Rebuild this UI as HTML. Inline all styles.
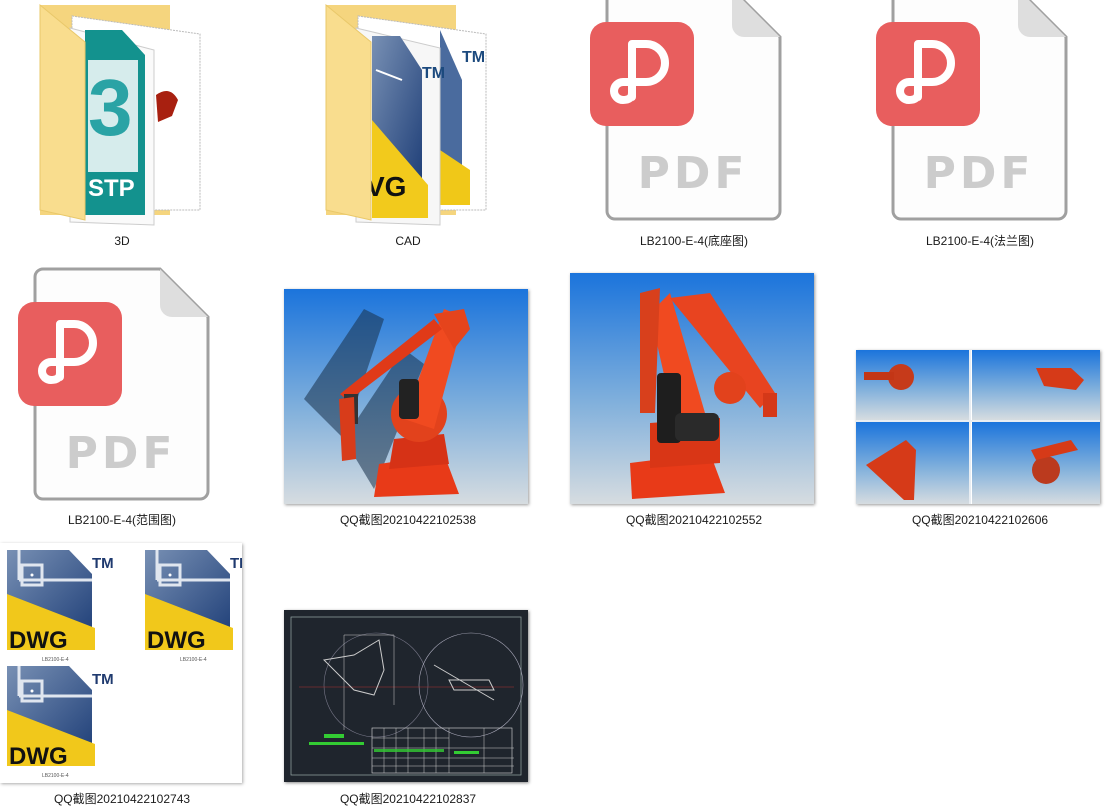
<!DOCTYPE html>
<html><head><meta charset="utf-8"><style>
html,body{margin:0;padding:0;background:#fff;width:1106px;height:812px;overflow:hidden;position:relative}
.a{position:absolute}
.l{position:absolute;width:240px;text-align:center;font:12px "Liberation Sans","Noto Sans CJK SC",sans-serif;color:#1a1a1a;line-height:14px}
svg{position:absolute;overflow:visible}
</style></head><body>

<svg width="0" height="0" style="position:absolute">
<defs>
<linearGradient id="sky" x1="0" y1="0" x2="0" y2="1"><stop offset="0" stop-color="#1b74dc"/><stop offset="0.55" stop-color="#7fafdc"/><stop offset="1" stop-color="#d6dce0"/></linearGradient>
<linearGradient id="dwgb" x1="0" y1="0" x2="1" y2="1"><stop offset="0" stop-color="#7890b4"/><stop offset="1" stop-color="#1f3f78"/></linearGradient>
<g id="pdf">
<path d="M8 0 H125 L173 48 V222 a8 8 0 0 1 -8 8 H8 a8 8 0 0 1 -8 -8 V8 a8 8 0 0 1 8 -8Z" fill="#fdfdfd" stroke="#a0a0a0" stroke-width="3"/>
<path d="M125 0 V36 a12 12 0 0 0 12 12 H173Z" fill="#dedede"/>
<rect x="-17" y="33" width="104" height="104" rx="16" fill="#e85e5e"/>
<g transform="translate(-17,33)">
<path d="M42 75 V22 H56 a19 19 0 0 1 0 38 H33 a9 9 0 0 0 0 18 q9 0 9 -7" fill="none" stroke="#fff" stroke-width="8" stroke-linecap="round" stroke-linejoin="round"/>
</g>
<text x="86" y="199" text-anchor="middle" font-family="DejaVu Sans,Liberation Sans,sans-serif" font-size="44" font-weight="bold" fill="#cccccc" letter-spacing="4">PDF</text>
</g>
<g id="dwg">
<path d="M0 0 H62 L85 24 V88 H0Z" fill="url(#dwgb)"/>
<path d="M12 0 V30 M12 30 H85" stroke="#e0e6ef" stroke-width="3"/>
<rect x="15" y="15" width="20" height="20" fill="none" stroke="#e0e6ef" stroke-width="3"/>
<circle cx="25" cy="25" r="1.5" fill="#fff"/>
<path d="M0 44 L88 78 V100 H0Z" fill="#f1c81b"/>
<text x="2" y="98" font-family="Liberation Sans,sans-serif" font-size="24" font-weight="bold" fill="#111">DWG</text>
<text x="85" y="18" font-family="Liberation Sans,sans-serif" font-size="15" font-weight="bold" fill="#1f3a6f">TM</text>
<text x="35" y="111" font-family="Liberation Sans,sans-serif" font-size="5" fill="#555">LB2100-E-4</text>
</g>
</defs>
</svg>

<!-- 3D folder -->
<svg class="a" style="left:0;top:0" width="260" height="230">
<path d="M40 5 H170 V215 H40Z" fill="#f5d57e"/>
<path d="M72 16 L200 34 V210 L72 210Z" fill="#fff" stroke="#bbb" stroke-dasharray="2 1"/>
<path d="M70 28 L154 50 V225 L70 222Z" fill="#fafafa" stroke="#ccc"/>
<path d="M85 30 H122 L145 55 V215 H85Z" fill="#13928e"/>
<path d="M88 60 H138 V172 H88Z" fill="#d6ecec"/>
<text x="88" y="135" font-family="Liberation Sans,sans-serif" font-size="80" font-weight="bold" fill="#2aa3a5">3</text>
<text x="88" y="196" font-family="Liberation Sans,sans-serif" font-size="24" font-weight="bold" fill="#fff">STP</text>
<path d="M156 95 Q170 85 178 100 L172 116 L158 122Z" fill="#a82010"/>
<path d="M40 5 L85 42 V220 L40 210Z" fill="#f9dd8e" stroke="#e9c86a"/>
</svg>
<div class="l" style="left:2px;top:234px">3D</div>

<!-- CAD folder -->
<svg class="a" style="left:0;top:0" width="520" height="230">
<path d="M326 5 H456 V215 H326Z" fill="#f5d57e"/>
<path d="M358 16 L486 34 V210 L358 210Z" fill="#fff" stroke="#bbb" stroke-dasharray="2 1"/>
<path d="M440 30 L462 80 V200 L440 205Z" fill="#4a6b9e"/>
<path d="M440 150 L470 170 V205 L440 205Z" fill="#f0c818"/>
<text x="462" y="62" font-family="Liberation Sans,sans-serif" font-size="16" font-weight="bold" fill="#1c4a7e">TM</text>
<path d="M356 28 L440 48 V225 L356 222Z" fill="#f7f7f7" stroke="#ccc"/>
<path d="M372 36 H400 L422 70 V185 H372Z" fill="url(#dwgb)"/>
<path d="M376 70 L402 80" stroke="#fff" stroke-width="2"/>
<path d="M372 120 L428 185 V218 H372Z" fill="#f2ca1c"/>
<text x="366" y="196" font-family="Liberation Sans,sans-serif" font-size="28" font-weight="bold" fill="#111">VG</text>
<text x="422" y="78" font-family="Liberation Sans,sans-serif" font-size="16" font-weight="bold" fill="#1c4a7e">TM</text>
<path d="M326 5 L371 42 V220 L326 210Z" fill="#f9dd8e" stroke="#e9c86a"/>
</svg>
<div class="l" style="left:288px;top:234px">CAD</div>

<!-- PDFs -->
<svg class="a" style="left:607px;top:-11px" width="175" height="232"><use href="#pdf"/></svg>
<div class="l" style="left:574px;top:234px">LB2100-E-4(底座图)</div>
<svg class="a" style="left:893px;top:-11px" width="175" height="232"><use href="#pdf"/></svg>
<div class="l" style="left:860px;top:234px">LB2100-E-4(法兰图)</div>
<svg class="a" style="left:35px;top:269px" width="175" height="232"><use href="#pdf"/></svg>
<div class="l" style="left:2px;top:513px">LB2100-E-4(范围图)</div>

<!-- robot 1 -->
<svg class="a" style="left:284px;top:289px;box-shadow:1px 1px 3px #999" width="244" height="215">
<rect width="244" height="215" fill="url(#sky)"/>
<path d="M20 110 L80 20 L100 30 L60 150Z M60 150 L120 60 L140 75 L90 200Z" fill="#183048" opacity="0.55"/>
<path d="M95 175 L160 165 L175 205 L90 208Z" fill="#e83a18"/>
<path d="M110 150 L160 145 L165 175 L105 180Z" fill="#d63216"/>
<circle cx="135" cy="125" r="28" fill="#e2421c"/>
<path d="M120 130 L160 20 L180 28 L150 140Z" fill="#f04a20"/>
<path d="M56 105 L150 30 L158 40 L64 112Z" fill="#e03a18"/>
<path d="M150 25 L180 20 L186 40 L170 60Z" fill="#e5441c"/>
<rect x="115" y="90" width="20" height="40" fill="#222" rx="4"/>
<rect x="60" y="105" width="14" height="30" fill="#333"/>
<path d="M55 110 L70 108 L72 170 L58 172Z" fill="#d83c1a"/>
</svg>
<div class="l" style="left:288px;top:513px">QQ截图20210422102538</div>

<!-- robot 2 -->
<svg class="a" style="left:570px;top:273px;box-shadow:1px 1px 3px #999" width="244" height="231">
<rect width="244" height="231" fill="url(#sky)"/>
<path d="M60 190 L140 180 L155 220 L62 226Z" fill="#e83a18"/>
<path d="M80 150 L150 145 L150 190 L80 195Z" fill="#d93616"/>
<path d="M105 150 L80 40 L100 20 L135 140Z" fill="#f04a20"/>
<path d="M100 25 L140 20 L205 120 L190 135Z" fill="#e84420"/>
<path d="M70 20 L90 15 L85 140 L70 140Z" fill="#d8401c"/>
<rect x="87" y="100" width="24" height="70" fill="#1e1e1e" rx="4"/>
<rect x="105" y="140" width="44" height="28" fill="#2a2a2a" rx="6"/>
<circle cx="160" cy="115" r="16" fill="#e2421c"/>
<rect x="193" y="120" width="14" height="24" fill="#d53818"/>
</svg>
<div class="l" style="left:574px;top:513px">QQ截图20210422102552</div>

<!-- 4 views -->
<svg class="a" style="left:856px;top:350px;box-shadow:1px 1px 3px #999" width="244" height="154">
<rect x="0" y="0" width="114" height="70" fill="url(#sky)"/><rect x="116" y="0" width="128" height="70" fill="url(#sky)"/>
<rect x="0" y="72" width="114" height="82" fill="url(#sky)"/><rect x="116" y="72" width="128" height="82" fill="url(#sky)"/>
<path d="M114 0 V154 M0 71 H244" stroke="#e8edf2" stroke-width="2"/>
<circle cx="45" cy="27" r="13" fill="#c63a1a"/><rect x="8" y="22" width="30" height="8" fill="#c33616"/>
<path d="M180 18 H215 L228 30 L220 40 L188 36Z" fill="#d63a18"/>
<path d="M10 115 L50 90 L60 100 L58 150 L48 150Z" fill="#d63a18"/>
<circle cx="190" cy="120" r="14" fill="#bb3a1e"/><path d="M175 100 L215 90 L222 100 L180 110Z" fill="#d63a18"/>
</svg>
<div class="l" style="left:860px;top:513px">QQ截图20210422102606</div>

<!-- DWG collage -->
<div class="a" style="left:0;top:543px;width:242px;height:240px;background:#fff;box-shadow:1px 1px 3px #aaa;overflow:hidden">
<svg class="a" style="left:7px;top:7px" width="120" height="115"><use href="#dwg"/></svg>
<svg class="a" style="left:145px;top:7px" width="120" height="115"><use href="#dwg"/></svg>
<svg class="a" style="left:7px;top:123px" width="120" height="115"><use href="#dwg"/></svg>
</div>
<div class="l" style="left:2px;top:792px">QQ截图20210422102743</div>

<!-- CAD drawing -->
<svg class="a" style="left:284px;top:610px;box-shadow:1px 1px 3px #888" width="244" height="172">
<rect width="244" height="172" fill="#1f252d"/>
<rect x="7" y="7" width="230" height="158" fill="none" stroke="#9aa" stroke-width="0.7"/>
<circle cx="92" cy="75" r="52" fill="none" stroke="#778" stroke-width="0.6"/>
<circle cx="187" cy="75" r="52" fill="none" stroke="#aab" stroke-width="0.6"/>
<path d="M15 77 H230" stroke="#a33" stroke-width="0.6"/>
<path d="M40 50 L70 45 L95 30 L100 60 L90 85 L70 80 Z" fill="none" stroke="#ccc" stroke-width="1"/>
<path d="M150 55 L210 90 M165 70 L205 70 L210 80 L170 80Z" fill="none" stroke="#ccc" stroke-width="1"/>
<path d="M60 25 H110 V95 M60 25 V120" stroke="#ccc" stroke-width="0.5" fill="none"/>
<rect x="88" y="118" width="140" height="45" fill="none" stroke="#ddd" stroke-width="0.6"/>
<path d="M88 128 H165 M88 138 H230 M88 148 H230 M88 156 H230 M165 118 V163 M200 118 V163 M100 118 V163 M112 118 V163 M124 118 V163 M140 118 V163 M152 118 V163" stroke="#ccc" stroke-width="0.5"/>
<rect x="25" y="132" width="55" height="3" fill="#3c3"/>
<rect x="40" y="124" width="20" height="4" fill="#3c3"/>
<rect x="90" y="139" width="70" height="3" fill="#3c3" opacity=".8"/>
<rect x="170" y="141" width="25" height="3" fill="#3c3"/>
</svg>
<div class="l" style="left:288px;top:792px">QQ截图20210422102837</div>

</body></html>
